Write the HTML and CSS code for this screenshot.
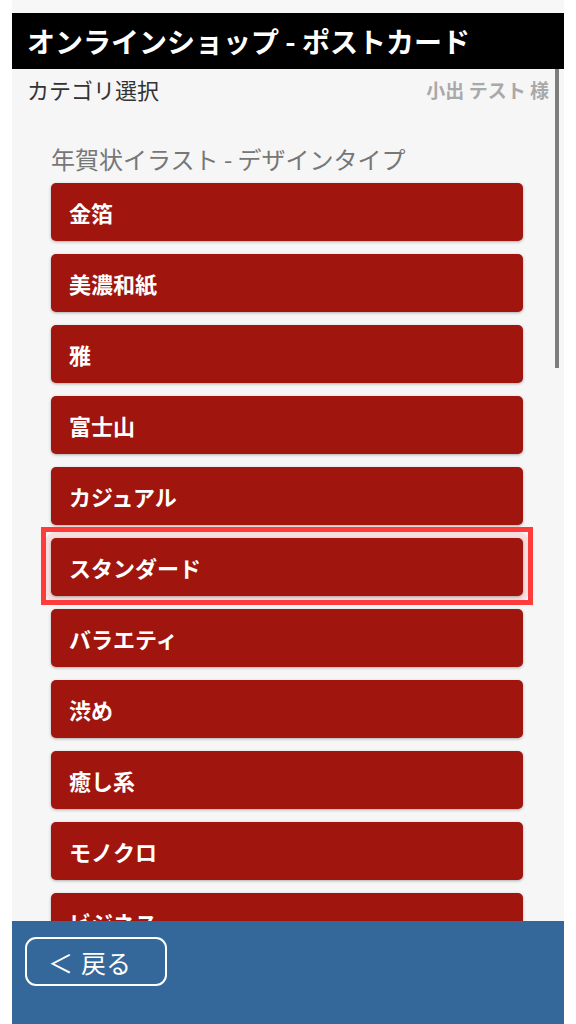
FILE: index.html
```html
<!DOCTYPE html>
<html>
<head>
  <meta name="viewport" content="width=device-width, initial-scale=1">
  <title>オンラインショップ - ポストカード</title>
  <link rel="stylesheet" href="styles.css">
</head>
<body>
  <div id="app">
    <div id="app-header">
      <h1>オンラインショップ - ポストカード</h1>
    </div>

    <div class="sub-header">
      <span class="page-name">カテゴリ選択</span>
      <span class="user-name">小出 テスト 様</span>
    </div>

    <div class="category-section">
      <h2 class="section-title">年賀状イラスト - デザインタイプ</h2>
      <div class="category-list">
        <button class="category-button">金箔</button>
        <button class="category-button">美濃和紙</button>
        <button class="category-button">雅</button>
        <button class="category-button">富士山</button>
        <button class="category-button">カジュアル</button>
        <button class="category-button selected">スタンダード</button>
        <button class="category-button">バラエティ</button>
        <button class="category-button">渋め</button>
        <button class="category-button">癒し系</button>
        <button class="category-button">モノクロ</button>
        <button class="category-button">ビジネス</button>
        <button class="category-button">シンプル</button>
      </div>
    </div>

    <div class="scroll-thumb"></div>

    <div id="app-footer">
      <button class="back-button"><span class="back-arrow">＜</span>戻る</button>
    </div>
  </div>
</body>
</html>
```

FILE: styles.css
```css
body {
  font-family: "Noto Sans CJK JP", "Noto Sans", sans-serif;
  margin: 0;
  background: #ffffff;
}

#app {
  position: relative;
  width: 552px;
  height: 1011px;
  margin-left: 12px;
  border-top: 13px solid #f7f7f7;
  background: #f6f6f6;
  overflow: hidden;
}

#app-header {
  height: 56px;
  background: #000;
  display: flex;
  align-items: center;
  padding: 0 15px;
}

#app-header h1 {
  margin: 0;
  font-size: 28px;
  font-weight: 700;
  color: #fff;
  line-height: 1;
}

.sub-header {
  height: 40px;
  display: flex;
  justify-content: space-between;
  align-items: center;
  padding: 0 15px;
}

.page-name {
  font-size: 22px;
  color: #333;
}

.user-name {
  font-size: 19px;
  font-weight: 700;
  color: #a9a9a9;
}

.category-section {
  padding: 35px 41px 0 39px;
}

.section-title {
  margin: 0 0 9px;
  font-size: 24px;
  font-weight: 400;
  line-height: 30px;
  color: #777;
}

.category-list {
  display: flex;
  flex-direction: column;
  gap: 13px;
}

.category-button {
  position: relative;
  height: 58px;
  padding: 0 18px;
  border: none;
  border-radius: 5px;
  background: #a0150d;
  color: #fff;
  font-family: inherit;
  font-size: 22px;
  font-weight: 700;
  text-align: left;
  box-shadow: 0 1px 3px rgba(0,0,0,0.3);
}

.category-button.selected {
  box-shadow: 0 1px 3px rgba(0,0,0,0.3), 0 0 0 6px #f8dede;
}

.category-button.selected::after {
  content: "";
  position: absolute;
  top: -11px;
  bottom: -9px;
  left: -10px;
  right: -10px;
  border: 5px solid #ff3c3c;
}

.scroll-thumb {
  position: absolute;
  top: 56px;
  right: 5px;
  width: 4px;
  height: 299px;
  background: #7d7d7d;
}

#app-footer {
  position: absolute;
  left: 0;
  right: 0;
  bottom: 0;
  height: 103px;
  background: #35689a;
  padding: 16px 13px 0;
  box-sizing: border-box;
}

.back-button {
  width: 142px;
  height: 49px;
  border: 2px solid #fff;
  border-radius: 11px;
  background: transparent;
  color: #fff;
  font-family: inherit;
  font-size: 25px;
  text-align: left;
  padding: 0 0 0 21px;
}

.back-arrow {
  margin-right: 8px;
}
```
